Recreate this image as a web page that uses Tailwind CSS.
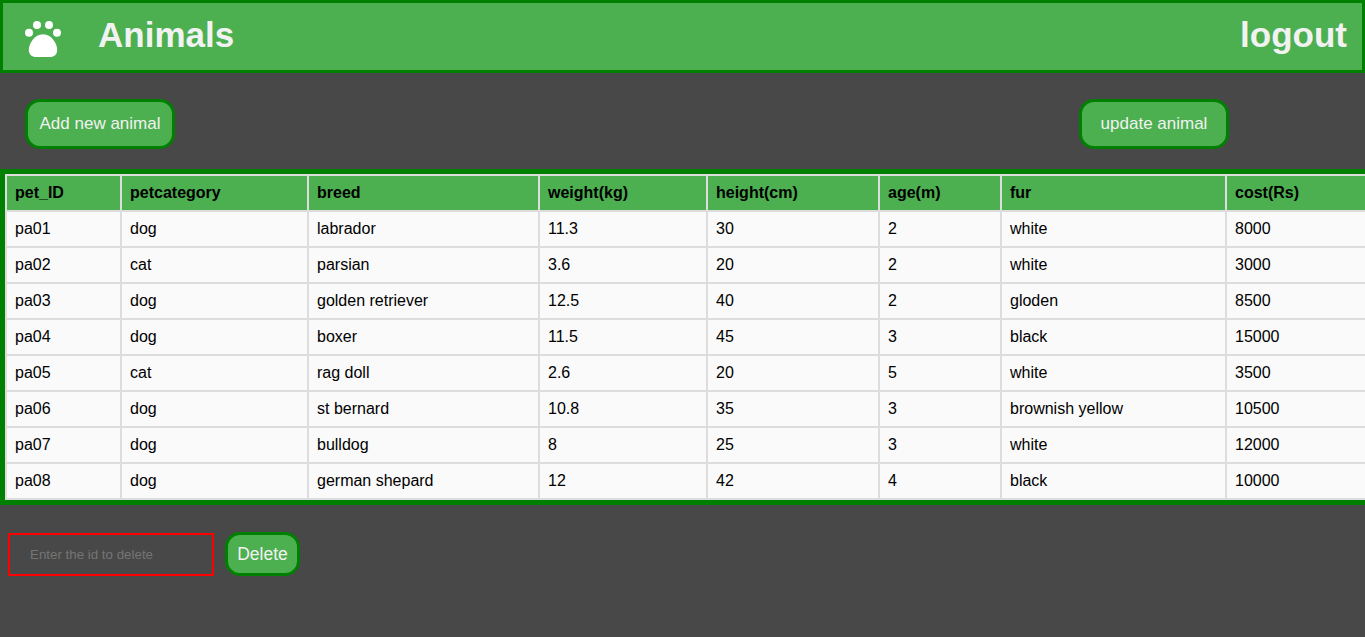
<!DOCTYPE html>
<html lang="en">
<head>
    <meta charset="UTF-8">
    <title>Animals</title>
    <script src="https://cdn.jsdelivr.net/npm/@tailwindcss/browser@4"></script>
</head>
<body class="bg-[#484848] font-['Liberation_Sans',Arial,sans-serif] overflow-hidden h-[637px]">
    <!-- header -->
    <div class="h-[73px] bg-[#4CAF50] border-[3px] border-[#008000] flex items-center justify-between text-[#f2f2f2] font-bold text-[35px]">
        <div class="flex items-center">
            <svg class="ml-[19px] w-[40px] h-[41px]" viewBox="22 16 40 41" fill="#fff">
                <path d="M43 34.3C34.5 34.3 28.8 43.5 28.8 50C28.8 54.5 32 57 36 57L50 57C54 57 57.2 54.5 57.2 50C57.2 43.5 51.5 34.3 43 34.3Z"/>
                <circle cx="29" cy="32.7" r="4"/>
                <circle cx="37" cy="25" r="4"/>
                <circle cx="49" cy="25" r="4"/>
                <circle cx="57" cy="32.7" r="4"/>
            </svg>
            <span class="ml-[36px] pb-[2px]">Animals</span>
        </div>
        <span class="mr-[15px] pb-[2px]">logout</span>
    </div>

    <!-- buttons -->
    <div class="flex pt-[26px] pl-[25px] text-[17px] text-[#f2f2f2]">
        <button class="w-[150px] h-[50px] bg-[#4CAF50] border-[3px] border-[#008000] rounded-[15px]">Add new animal</button>
        <button class="ml-[904px] w-[150px] h-[50px] bg-[#4CAF50] border-[3px] border-[#008000] rounded-[15px]">update animal</button>
    </div>

    <!-- table -->
    <div class="mt-[20px] w-[1500px] border-[5px] border-[#008000]">
        <table id="pets" class="border-collapse table-fixed w-[1400px] text-base leading-[18px] text-black text-left bg-[#fafafa]">
            <thead>
                <tr class="bg-[#4CAF50]">
                    <th class="w-[115px] border-2 border-[#ddd] p-2">pet_ID</th>
                    <th class="w-[187px] border-2 border-[#ddd] p-2">petcategory</th>
                    <th class="w-[231px] border-2 border-[#ddd] p-2">breed</th>
                    <th class="w-[168px] border-2 border-[#ddd] p-2">weight(kg)</th>
                    <th class="w-[172px] border-2 border-[#ddd] p-2">height(cm)</th>
                    <th class="w-[122px] border-2 border-[#ddd] p-2">age(m)</th>
                    <th class="w-[225px] border-2 border-[#ddd] p-2">fur</th>
                    <th class="border-2 border-[#ddd] p-2">cost(Rs)</th>
                </tr>
            </thead>
            <tbody>
                <tr><td class="border-2 border-[#ddd] p-2">pa01</td><td class="border-2 border-[#ddd] p-2">dog</td><td class="border-2 border-[#ddd] p-2">labrador</td><td class="border-2 border-[#ddd] p-2">11.3</td><td class="border-2 border-[#ddd] p-2">30</td><td class="border-2 border-[#ddd] p-2">2</td><td class="border-2 border-[#ddd] p-2">white</td><td class="border-2 border-[#ddd] p-2">8000</td></tr>
                <tr><td class="border-2 border-[#ddd] p-2">pa02</td><td class="border-2 border-[#ddd] p-2">cat</td><td class="border-2 border-[#ddd] p-2">parsian</td><td class="border-2 border-[#ddd] p-2">3.6</td><td class="border-2 border-[#ddd] p-2">20</td><td class="border-2 border-[#ddd] p-2">2</td><td class="border-2 border-[#ddd] p-2">white</td><td class="border-2 border-[#ddd] p-2">3000</td></tr>
                <tr><td class="border-2 border-[#ddd] p-2">pa03</td><td class="border-2 border-[#ddd] p-2">dog</td><td class="border-2 border-[#ddd] p-2">golden retriever</td><td class="border-2 border-[#ddd] p-2">12.5</td><td class="border-2 border-[#ddd] p-2">40</td><td class="border-2 border-[#ddd] p-2">2</td><td class="border-2 border-[#ddd] p-2">gloden</td><td class="border-2 border-[#ddd] p-2">8500</td></tr>
                <tr><td class="border-2 border-[#ddd] p-2">pa04</td><td class="border-2 border-[#ddd] p-2">dog</td><td class="border-2 border-[#ddd] p-2">boxer</td><td class="border-2 border-[#ddd] p-2">11.5</td><td class="border-2 border-[#ddd] p-2">45</td><td class="border-2 border-[#ddd] p-2">3</td><td class="border-2 border-[#ddd] p-2">black</td><td class="border-2 border-[#ddd] p-2">15000</td></tr>
                <tr><td class="border-2 border-[#ddd] p-2">pa05</td><td class="border-2 border-[#ddd] p-2">cat</td><td class="border-2 border-[#ddd] p-2">rag doll</td><td class="border-2 border-[#ddd] p-2">2.6</td><td class="border-2 border-[#ddd] p-2">20</td><td class="border-2 border-[#ddd] p-2">5</td><td class="border-2 border-[#ddd] p-2">white</td><td class="border-2 border-[#ddd] p-2">3500</td></tr>
                <tr><td class="border-2 border-[#ddd] p-2">pa06</td><td class="border-2 border-[#ddd] p-2">dog</td><td class="border-2 border-[#ddd] p-2">st bernard</td><td class="border-2 border-[#ddd] p-2">10.8</td><td class="border-2 border-[#ddd] p-2">35</td><td class="border-2 border-[#ddd] p-2">3</td><td class="border-2 border-[#ddd] p-2">brownish yellow</td><td class="border-2 border-[#ddd] p-2">10500</td></tr>
                <tr><td class="border-2 border-[#ddd] p-2">pa07</td><td class="border-2 border-[#ddd] p-2">dog</td><td class="border-2 border-[#ddd] p-2">bulldog</td><td class="border-2 border-[#ddd] p-2">8</td><td class="border-2 border-[#ddd] p-2">25</td><td class="border-2 border-[#ddd] p-2">3</td><td class="border-2 border-[#ddd] p-2">white</td><td class="border-2 border-[#ddd] p-2">12000</td></tr>
                <tr><td class="border-2 border-[#ddd] p-2">pa08</td><td class="border-2 border-[#ddd] p-2">dog</td><td class="border-2 border-[#ddd] p-2">german shepard</td><td class="border-2 border-[#ddd] p-2">12</td><td class="border-2 border-[#ddd] p-2">42</td><td class="border-2 border-[#ddd] p-2">4</td><td class="border-2 border-[#ddd] p-2">black</td><td class="border-2 border-[#ddd] p-2">10000</td></tr>
            </tbody>
        </table>
    </div>

    <!-- delete -->
    <div class="flex items-center mt-[27px] pl-[8px]">
        <input type="text" placeholder="Enter the id to delete" class="w-[206px] h-[43px] border-2 border-[#ff0000] pl-[20px] text-[13.33px] placeholder:text-[#757575] outline-none">
        <button class="ml-[11px] w-[75px] h-[44px] bg-[#4CAF50] border-[3px] border-[#008000] rounded-[15px] text-[17.5px] text-[#f2f2f2]">Delete</button>
    </div>
</body>
</html>
